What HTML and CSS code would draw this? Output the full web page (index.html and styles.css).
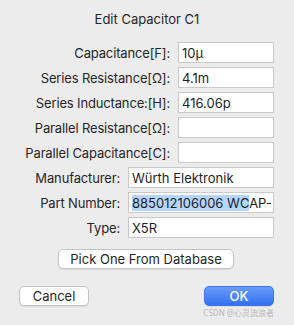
FILE: index.html
```html
<!DOCTYPE html>
<html lang="en">
<head>
  <meta charset="UTF-8" />
  <title>Edit Capacitor C1</title>
  <link rel="stylesheet" href="styles.css">
</head>
<body>
  <div class="dialog">
    <h1 class="title">Edit Capacitor C1</h1>

    <div class="fields">
      <div class="row">
        <span class="label">Capacitance[F]:</span>
        <div class="field short">10µ</div>
      </div>
      <div class="row">
        <span class="label">Series Resistance[Ω]:</span>
        <div class="field short">4.1m</div>
      </div>
      <div class="row">
        <span class="label">Series Inductance:[H]:</span>
        <div class="field short">416.06p</div>
      </div>
      <div class="row">
        <span class="label">Parallel Resistance[Ω]:</span>
        <div class="field short"></div>
      </div>
      <div class="row">
        <span class="label">Parallel Capacitance[C]:</span>
        <div class="field short"></div>
      </div>
      <div class="row">
        <span class="label">Manufacturer:</span>
        <div class="field long">Würth Elektronik</div>
      </div>
      <div class="row">
        <span class="label">Part Number:</span>
        <div class="field long"><span class="selected">885012106006 WC</span>AP-</div>
      </div>
      <div class="row">
        <span class="label">Type:</span>
        <div class="field long">X5R</div>
      </div>
    </div>

    <div class="pick">
      <button class="btn pick-btn">Pick One From Database</button>
    </div>

    <div class="actions">
      <button class="btn">Cancel</button>
      <button class="btn primary">OK</button>
    </div>
    <div class="watermark">CSDN @心灵流浪者</div>
  </div>
</body>
</html>
```

FILE: styles.css
```css
body {
  margin: 0;
  background-color: #ececec;
  font-family: Inter, "Noto Sans", sans-serif;
  font-size: 13px;
  color: #262626;
}

.dialog {
  width: 294px;
  height: 325px;
  box-sizing: border-box;
  padding: 11px 20px 0 19px;
}

.title {
  margin: 0;
  font-size: 13px;
  font-weight: normal;
  text-align: center;
  line-height: 16px;
  padding-left: 1px;
}

.fields {
  margin-top: 15px;
  display: flex;
  flex-direction: column;
  gap: 4px;
}

.row {
  display: flex;
  justify-content: flex-end;
  align-items: center;
  gap: 8px;
  height: 21px;
}

.label {
  white-space: nowrap;
  letter-spacing: -0.15px;
}

.field {
  height: 21px;
  box-sizing: border-box;
  border: 1px solid #c9c9c9;
  background: #fff;
  padding: 0 3px;
  line-height: 20px;
  white-space: nowrap;
  overflow: hidden;
  color: #1e1e1e;
}

.short {
  width: 96px;
}

.long {
  width: 146px;
}

.selected {
  background-color: #b4d6fe;
}

.pick {
  margin-top: 11px;
  display: flex;
  justify-content: center;
  padding-right: 1px;
}

.btn {
  font-family: Inter, "Noto Sans", sans-serif;
  font-size: 13px;
  color: #262626;
  background: #fff;
  border: 1px solid #c4c4c4;
  border-radius: 5px;
  box-shadow: 0 1px 1px rgba(0,0,0,0.08);
  height: 20px;
  padding: 0;
  line-height: 18px;
}

.pick-btn {
  width: 176px;
}

.actions {
  margin-top: 17px;
  display: flex;
  justify-content: space-between;
}

.actions .btn {
  width: 70px;
}

.primary {
  color: #fff;
  font-weight: 500;
  border: 1px solid #3b74ee;
  background: linear-gradient(#6a9bfa, #3470f2);
}

.watermark {
  text-align: right;
  font-size: 8px;
  color: #b8b8b8;
  margin-top: 1px;
  font-family: "Noto Sans", "Noto Sans CJK SC", sans-serif;
}
```
